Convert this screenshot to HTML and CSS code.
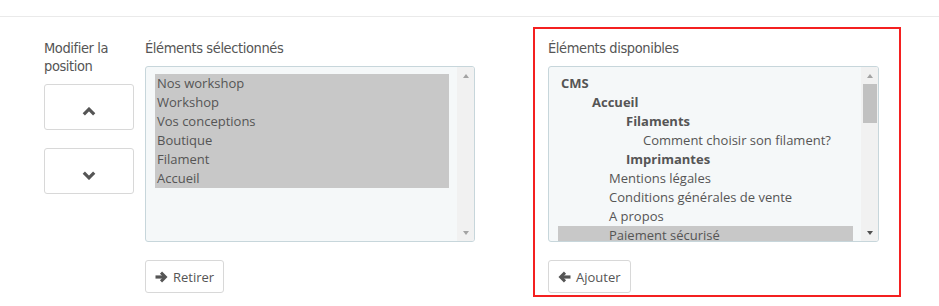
FILE: index.html
```html
<!DOCTYPE html>
<html lang="fr">
<head>
    <meta charset="UTF-8">
    <meta name="viewport" content="width=device-width, initial-scale=1.0">
    <title>Position des éléments</title>
    <link rel="stylesheet" href="styles.css">
</head>
<body>
    <div class="topbar"></div>

    <div class="panel">
        <div class="col-position">
            <h4 class="col-title">Modifier la position</h4>
            <button type="button" class="btn btn-move">
                <svg width="14" height="9" viewBox="0 0 14 9"><polyline points="1.8,7.4 7,2.2 12.2,7.4" fill="none" stroke="#555" stroke-width="3.2"/></svg>
            </button>
            <button type="button" class="btn btn-move">
                <svg width="14" height="9" viewBox="0 0 14 9"><polyline points="1.8,1.6 7,6.8 12.2,1.6" fill="none" stroke="#555" stroke-width="3.2"/></svg>
            </button>
        </div>

        <div class="col-list">
            <h4 class="col-title">Éléments sélectionnés</h4>
            <div class="listbox">
                <ul class="options">
                    <li class="selected">Nos workshop</li>
                    <li class="selected">Workshop</li>
                    <li class="selected">Vos conceptions</li>
                    <li class="selected">Boutique</li>
                    <li class="selected">Filament</li>
                    <li class="selected">Accueil</li>
                </ul>
                <div class="scrollbar">
                    <span class="sb-arrow up"></span>
                    <span class="sb-track"></span>
                    <span class="sb-arrow down"></span>
                </div>
            </div>
            <button type="button" class="btn btn-action">
                <svg width="13" height="12" viewBox="0 0 13 12"><path d="M0.5 6H10" stroke="#555" stroke-width="3.2"/><path d="M6 1.6L10.4 6L6 10.4" fill="none" stroke="#555" stroke-width="3"/></svg>
                Retirer
            </button>
        </div>

        <div class="col-list col-available">
            <h4 class="col-title">Éléments disponibles</h4>
            <div class="listbox">
                <ul class="options">
                    <li class="group">CMS</li>
                    <li class="group lvl-1">Accueil</li>
                    <li class="group lvl-2">Filaments</li>
                    <li class="lvl-3">Comment choisir son filament?</li>
                    <li class="group lvl-2">Imprimantes</li>
                    <li class="lvl-page">Mentions légales</li>
                    <li class="lvl-page">Conditions générales de vente</li>
                    <li class="lvl-page">A propos</li>
                    <li class="lvl-page selected">Paiement sécurisé</li>
                </ul>
                <div class="scrollbar">
                    <span class="sb-arrow up"></span>
                    <span class="sb-track"><span class="sb-thumb"></span></span>
                    <span class="sb-arrow down active"></span>
                </div>
            </div>
            <button type="button" class="btn btn-action">
                <svg width="13" height="12" viewBox="0 0 13 12"><path d="M3 6H12.5" stroke="#555" stroke-width="3.2"/><path d="M7 1.6L2.6 6L7 10.4" fill="none" stroke="#555" stroke-width="3"/></svg>
                Ajouter
            </button>
        </div>
    </div>
</body>
</html>
```

FILE: styles.css
```css
body {
    margin: 0;
    font-family: 'Open Sans', Arial, sans-serif;
    font-size: 13px;
    color: #555;
    background: #fff;
}
.topbar {
    height: 16px;
    border-bottom: 1px solid #eaeaea;
}
.panel {
    display: flex;
    align-items: flex-start;
    padding-top: 10px;
}
.col-title {
    margin: 0 0 9px 0;
    font-family: 'DejaVu Sans Condensed', 'DejaVu Sans', sans-serif;
    font-stretch: condensed;
    font-size: 14.5px;
    letter-spacing: -0.4px;
    line-height: 18px;
    font-weight: normal;
    color: #555;
}
.col-position {
    width: 90px;
    margin-left: 44px;
    padding-top: 12px;
    display: flex;
    flex-direction: column;
    gap: 18px;
}
.col-position .col-title {
    margin-bottom: -9px;
}
.col-list {
    width: 330px;
    margin-left: 11px;
    padding-top: 12px;
}
.col-available {
    width: 331px;
    margin-left: 58px;
    padding: 10px 20px 2px 13px;
    border: 2px solid #f42020;
}
.btn {
    display: flex;
    align-items: center;
    background: #fff;
    border: 1px solid #d8d8d8;
    border-radius: 3px;
    font-family: 'Open Sans', Arial, sans-serif;
    font-size: 13px;
    color: #555;
    cursor: pointer;
}
.btn-move {
    height: 46px;
    width: 90px;
    justify-content: center;
    padding: 9px 0 0 0;
}
.btn-action {
    height: 33px;
    margin-top: 18px;
    padding: 0 9px;
    gap: 5px;
}
.listbox {
    display: flex;
    height: 176px;
    box-sizing: border-box;
    background: #f5f8f9;
    border: 1px solid #c7d6db;
    border-radius: 3px;
    overflow: hidden;
}
.options {
    flex: 1;
    margin: 0;
    padding: 7px 8px 0 9px;
    list-style: none;
    overflow: hidden;
}
.options li {
    height: 19px;
    line-height: 19px;
    padding-left: 2px;
    white-space: nowrap;
}
.options li.selected {
    background: #c8c8c8;
}
.options li.group {
    font-weight: bold;
    padding-left: 3px;
}
.options li.lvl-1 { padding-left: 34px; }
.options li.lvl-2 { padding-left: 68px; }
.options li.lvl-3 { padding-left: 85px; }
.options li.lvl-page { padding-left: 51px; }
.scrollbar {
    width: 17px;
    background: #f1f1f1;
    display: flex;
    flex-direction: column;
}
.sb-arrow {
    height: 17px;
    display: flex;
    align-items: center;
    justify-content: center;
}
.sb-arrow::before {
    content: '';
    border-left: 3.5px solid transparent;
    border-right: 3.5px solid transparent;
}
.sb-arrow.up::before {
    border-bottom: 4px solid #a3a3a3;
}
.sb-arrow.down::before {
    border-top: 4px solid #a3a3a3;
}
.sb-arrow.down.active::before {
    border-top-color: #505050;
}
.sb-track {
    flex: 1;
    display: flex;
    flex-direction: column;
    align-items: center;
}
.sb-thumb {
    width: 14px;
    height: 39px;
    background: #c1c1c1;
}
```
